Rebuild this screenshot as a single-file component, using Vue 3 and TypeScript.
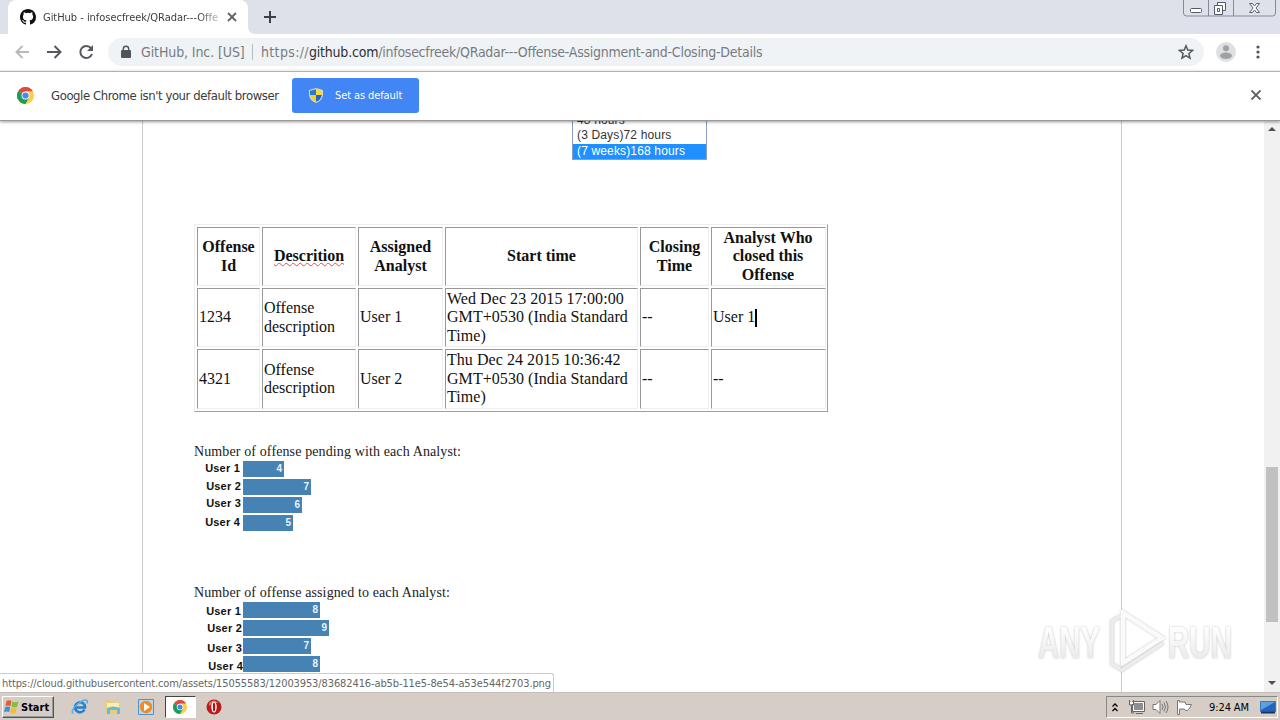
<script setup lang="ts">
interface Offense {
  id: string
  description: string
  assigned: string
  start: string
  closing: string
  closedBy: string
  editing?: boolean
}
interface Chart {
  title: string
  kind: string
  rows: { user: string; value: number }[]
}

const headers: string[] = ['Offense Id', 'Descrition', 'Assigned Analyst', 'Start time', 'Closing Time', 'Analyst Who closed this Offense']
const offenses: Offense[] = [
  { id: '1234', description: 'Offense description', assigned: 'User 1', start: 'Wed Dec 23 2015 17:00:00 GMT+0530 (India Standard Time)', closing: '--', closedBy: 'User 1', editing: true },
  { id: '4321', description: 'Offense description', assigned: 'User 2', start: 'Thu Dec 24 2015 10:36:42 GMT+0530 (India Standard Time)', closing: '--', closedBy: '--' },
]
const charts: Chart[] = [
  {
    title: 'Number of offense pending with each Analyst:',
    kind: 'pending',
    rows: [{ user: 'User 1', value: 4 }, { user: 'User 2', value: 7 }, { user: 'User 3', value: 6 }, { user: 'User 4', value: 5 }],
  },
  {
    title: 'Number of offense assigned to each Analyst:',
    kind: 'assigned',
    rows: [{ user: 'User 1', value: 8 }, { user: 'User 2', value: 9 }, { user: 'User 3', value: 7 }, { user: 'User 4', value: 8 }],
  },
]
const barWidth = (value: number): string => `${value * 9 + 5}px`
</script>

<template>
  <div class="screen">
    <header class="tabstrip">
      <div class="tab">
        <svg class="octo" width="16" height="16" viewBox="0 0 16 16"><path fill="#111" d="M8 0C3.58 0 0 3.58 0 8c0 3.54 2.29 6.53 5.47 7.59.4.07.55-.17.55-.38 0-.19-.01-.82-.01-1.49-2.01.37-2.53-.49-2.69-.94-.09-.23-.48-.94-.82-1.13-.28-.15-.68-.52-.01-.53.63-.01 1.08.58 1.23.82.72 1.21 1.87.87 2.33.66.07-.52.28-.87.51-1.07-1.78-.2-3.64-.89-3.64-3.95 0-.87.31-1.59.82-2.15-.08-.2-.36-1.02.08-2.12 0 0 .67-.21 2.2.82a7.6 7.6 0 0 1 4 0c1.53-1.04 2.2-.82 2.2-.82.44 1.1.16 1.92.08 2.12.51.56.82 1.27.82 2.15 0 3.07-1.87 3.75-3.65 3.95.29.25.54.73.54 1.48 0 1.07-.01 1.93-.01 2.2 0 .21.15.46.55.38A8 8 0 0 0 16 8c0-4.42-3.58-8-8-8z" /></svg>
        <span class="tab-title">GitHub - infosecfreek/QRadar---Offe</span>
        <svg class="tab-close" width="10" height="10" viewBox="0 0 10 10"><path d="M1 1l8 8M9 1L1 9" stroke="#5f6368" stroke-width="1.8" /></svg>
      </div>
      <svg class="tab-foot" width="8" height="8" viewBox="0 0 8 8"><path d="M0 0v8h8Q0 8 0 0z" fill="#fff" /></svg>
      <svg class="newtab" width="12" height="12" viewBox="0 0 12 12"><path d="M6 0v12M0 6h12" stroke="#3c4043" stroke-width="2" /></svg>
      <svg class="winbtns" width="94" height="18" viewBox="0 0 94 18" fill="none">
        <path d="M.5 0v13q0 3 3 3h86q3 0 3-3V0M25.500 0v16M50.500 0v16" stroke="#85899a" />
        <rect x="7.500" y="8.500" width="11" height="4" rx="1" fill="#fff" stroke="#555b66" />
        <path d="M34.500 2.500h8v8h-8z" fill="#fff" stroke="#555b66" />
        <path d="M31.500 5.500h8v9h-8z" fill="#fff" stroke="#555b66" />
        <path d="M34.500 8.500h2v3h-2z" stroke="#555b66" />
        <path d="M66.500 3.500h3l2 2.500 2-2.500h3l-3.500 4.500 3.500 4.500h-3l-2-2.500-2 2.500h-3l3.500-4.500z" fill="#fff" stroke="#5c616c" />
      </svg>
    </header>

    <div class="toolbar">
      <svg class="nav" width="100" height="24" viewBox="0 0 100 24" fill="none" stroke-width="2">
        <path d="M29 12H17M22.500 6l-6 6 6 6" stroke="#b8babd" />
        <path d="M47 12h13M54.500 6l6 6-6 6" stroke="#55585c" />
        <path d="M91 8.200A6 6 0 1 0 92 14" stroke="#55585c" />
        <path d="M93 5v6h-6z" fill="#55585c" />
      </svg>
      <div class="omnibox">
        <svg width="10" height="14" viewBox="0 0 10 14"><path d="M2.300 6V4a2.700 2.700 0 0 1 5.400 0v2" fill="none" stroke="#505358" stroke-width="1.400" /><rect x="0" y="5" width="10" height="8" rx="1" fill="#505358" /></svg>
        <span class="org">GitHub, Inc. [US]</span>
        <i class="sep"></i>
        <span class="url"><span class="scheme">https://</span><b>github.com</b>/infosecfreek/QRadar---Offense-Assignment-and-Closing-Details</span>
        <svg class="star" width="16" height="16" viewBox="0 0 16 16"><path d="M8 1.800l1.800 4.300 4.700.4-3.600 3 1.100 4.600L8 11.600l-4 2.500 1.100-4.600-3.600-3 4.700-.4z" fill="none" stroke="#55585c" stroke-width="1.500" /></svg>
      </div>
      <svg class="avatar" width="20" height="20" viewBox="0 0 20 20"><circle cx="10" cy="10" r="10" fill="#dfe0e1" /><circle cx="10" cy="6.200" r="3" fill="#a0a1a3" /><ellipse cx="10" cy="13.700" rx="6" ry="3.200" fill="#a0a1a3" /></svg>
      <svg class="dots" width="4" height="14" viewBox="0 0 4 14" fill="#505358"><circle cx="2" cy="2" r="1.600" /><circle cx="2" cy="7" r="1.600" /><circle cx="2" cy="12" r="1.600" /></svg>
    </div>

    <div class="infobar">
      <svg class="chrome" width="17" height="17" viewBox="0 0 18 18"><circle cx="9" cy="9" r="9" fill="#ffcd40" /><path d="M9 9L1.200 4.500A9 9 0 0 1 16.800 4.500H9z" fill="#de4b3d" /><path d="M1.200 4.500A9 9 0 0 0 9 18l3.700-6.800L9 9z" fill="#1b9d58" /><circle cx="9" cy="9" r="4.200" fill="#fff" /><circle cx="9" cy="9" r="3.300" fill="#4588f0" /></svg>
      <span class="message">Google Chrome isn't your default browser</span>
      <div class="default-btn">
        <svg width="14" height="15" viewBox="0 0 14 15"><path d="M7 0L0 2v5q1 6 7 8 6-2 7-8V2z" fill="#d5d8c4" /><path d="M7 1.200L1 2.800V7h6z" fill="#2579d0" /><path d="M7 1.200l6 1.600V7H7z" fill="#f7d83e" /><path d="M1.200 7H7v6.700Q2 12 1.200 7z" fill="#f5cf32" /><path d="M7 7h5.800Q12 12 7 13.700z" fill="#2268bd" /></svg>
        <span>Set as default</span>
      </div>
      <svg class="info-close" width="10" height="10" viewBox="0 0 10 10"><path d="M.5.5l9 9M9.500.5l-9 9" stroke="#5b5b5b" stroke-width="1.800" /></svg>
    </div>

    <div class="viewport">
      <main class="page">
        <div class="listbox">
          <div class="partial">48 hours</div>
          <div>(3 Days)72 hours</div>
          <div class="chosen">(7 weeks)168 hours</div>
        </div>
        <div class="table">
          <div v-for="h in headers" :key="h" class="cell head"><span :class="{ misspelt: h === 'Descrition' }">{{ h }}</span></div>
          <template v-for="o in offenses" :key="o.id">
            <div class="cell"><span>{{ o.id }}</span></div>
            <div class="cell"><span>{{ o.description }}</span></div>
            <div class="cell"><span>{{ o.assigned }}</span></div>
            <div class="cell"><span class="date">{{ o.start }}</span></div>
            <div class="cell"><span>{{ o.closing }}</span></div>
            <div class="cell"><span>{{ o.closedBy }}</span><i v-if="o.editing" class="caret"></i></div>
          </template>
        </div>
        <section v-for="c in charts" :key="c.kind" class="chart" :class="c.kind">
          <h2>{{ c.title }}</h2>
          <div v-for="r in c.rows" :key="r.user" class="row">
            <span class="label">{{ r.user }}</span>
            <div class="bar" :style="{ width: barWidth(r.value) }">{{ r.value }}</div>
          </div>
        </section>
      </main>
      <aside class="scrollbar">
        <svg width="8" height="4" viewBox="0 0 8 4"><path d="M0 4l4-4 4 4z" fill="#505050" /></svg>
        <div class="thumb"></div>
        <svg width="8" height="4" viewBox="0 0 8 4"><path d="M0 0h8L4 4z" fill="#505050" /></svg>
      </aside>
      <div class="status">https://cloud.githubusercontent.com/assets/15055583/12003953/83682416-ab5b-11e5-8e54-a53e544f2703.png</div>
      <svg class="watermark" width="210" height="72" viewBox="0 0 210 72">
        <defs>
          <linearGradient id="fade" x1="0" y1="0" x2="0" y2="1"><stop offset="0.2" stop-color="#fff" /><stop offset="1" stop-color="#e4e4e4" /></linearGradient>
        </defs>
        <g class="mark">
          <text x="8" y="52" textLength="62" lengthAdjust="spacingAndGlyphs">ANY</text>
          <text x="138" y="52" textLength="64" lengthAdjust="spacingAndGlyphs">RUN</text>
          <path d="M91 10l-9 5v43l10 6 41-27" fill="none" stroke="#ececec" stroke-width="3.500" />
          <path d="M93 7l39 25-39 25z" fill="none" stroke="#fafafa" stroke-width="4.500" />
        </g>
      </svg>
    </div>

    <footer class="taskbar">
      <div class="start">
        <svg width="16" height="16" viewBox="0 0 16 16"><path d="M2.500 2Q5 .5 7.500 2L6.500 7Q4 6 1.500 7z" fill="#e85b2a" /><path d="M8.500 2.500Q11 4 14.500 2.500L13 8Q10 9 7.500 7.500z" fill="#83bd45" /><path d="M1.300 8Q4 7 6.300 8L5.200 13Q3 12 0 13z" fill="#468fd5" /><path d="M7.300 8.500Q10 10 12.800 9L11.500 14Q9 15 6.200 13.500z" fill="#f4bd31" /></svg>
        <b>Start</b>
      </div>
      <div class="quick ie">
        <svg width="18" height="16" viewBox="0 0 18 16"><path d="M13.500 10.500A5 5 0 1 1 14 8.500H5" fill="none" stroke="#2480cf" stroke-width="2.600" /><path d="M2 14.500C-2 11 12-1 16 1.500q1 .8-.5 3" fill="none" stroke="#54aee9" stroke-width="1.500" /></svg>
      </div>
      <div class="quick">
        <svg width="16" height="16" viewBox="0 0 16 16"><path d="M1 1.500h6l1 2h6v11H1z" fill="#e8ce72" /><path d="M2 4h12v6H2z" fill="#fff0a8" /><path d="M2 9q6-3 13 0v6h-3v-4H5v4H2z" fill="#65b9e4" /></svg>
      </div>
      <div class="quick">
        <svg width="16" height="16" viewBox="0 0 16 16"><path d="M.5.500h15v15H.5z" fill="#b9d8f0" stroke="#4b94cc" /><circle cx="8" cy="8" r="6.200" fill="#f08b21" /><path d="M6 4l6 4-6 4z" fill="#fff" /></svg>
      </div>
      <div class="quick active">
        <svg width="14" height="14" viewBox="0 0 18 18"><circle cx="9" cy="9" r="9" fill="#ffcd40" /><path d="M9 9L1.200 4.500A9 9 0 0 1 16.800 4.500H9z" fill="#de4b3d" /><path d="M1.200 4.500A9 9 0 0 0 9 18l3.700-6.800L9 9z" fill="#1b9d58" /><circle cx="9" cy="9" r="4.200" fill="#fff" /><circle cx="9" cy="9" r="3.300" fill="#4588f0" /></svg>
      </div>
      <div class="quick opera">
        <svg width="16" height="16" viewBox="0 0 16 16"><circle cx="8" cy="8" r="7.500" fill="#b91b1b" /><path d="M3 4q5-5 10 0-5-1-10 3z" fill="#e07065" /><ellipse cx="8" cy="8" rx="2.700" ry="5.500" fill="#fff" /><ellipse cx="8" cy="8" rx="1.200" ry="4.500" fill="#a81616" /></svg>
      </div>
      <div class="tray">
        <svg class="chev" width="6" height="9" viewBox="0 0 6 9" fill="none" stroke="#000" stroke-width="1.300"><path d="M.5 3.500L3 1l2.500 2.500M.5 8L3 5.500 5.500 8" /></svg>
        <svg class="net" width="17" height="16" viewBox="0 0 17 16"><path d="M5.500 3.500h10v8h-10z" fill="#8f8f8f" stroke="#fff" /><path d="M4.500 2.500h12v10h-12zM8 14.500h7M1.500 1v5h4V1M3.500 6v8h3" fill="none" stroke="#666" /><path d="M2 3h3v2H2z" fill="#fff" /></svg>
        <svg class="vol" width="17" height="16" viewBox="0 0 17 16" fill="none" stroke="#757575"><path d="M1 5.500h3L8 1.500v13l-4-4H1z" fill="#fff" /><path d="M10 5q2 3 0 6M12 3.500q3 4.500 0 9M14 2q4 6 0 12" /></svg>
        <svg class="flag" width="17" height="15" viewBox="0 0 17 15"><path d="M1.500.500v14h2V9h5l1 1.500q3 1 6-6H10L9 2H3.500V.500z" fill="#fff" stroke="#777" /></svg>
        <span class="clock">9:24 AM</span>
        <svg class="desk" width="16" height="13" viewBox="0 0 16 13"><path d="M.5.500h15v10H.5z" fill="#2464bd" stroke="#3d77bd" /><path d="M1 1h14L1 9z" fill="#5ba0df" /><path d="M1 11.500h14" stroke="#17345e" stroke-width="2" /></svg>
      </div>
    </footer>
  </div>
</template>

<style>
body { margin: 0; overflow: hidden; }
</style>

<style scoped>
.screen { width: 1280px; height: 720px; display: flex; flex-direction: column; overflow: hidden; background: #fff; font-family: "DejaVu Sans Condensed", "DejaVu Sans", sans-serif; font-stretch: condensed; }
svg { display: block; flex: none; }
.tabstrip { height: 34px; flex: none; background: #dee1e9; display: flex; box-sizing: border-box; padding-left: 8px; }
.tab { width: 240px; height: 34px; box-sizing: border-box; background: #fff; border-radius: 8px 8px 0 0; display: flex; align-items: center; padding-left: 12px; }
.tab-title { width: 176px; margin-left: 7px; margin-right: 1px; white-space: nowrap; font-size: 11px; color: #3c4043; letter-spacing: -0.03px; mask-image: linear-gradient(90deg, #000 88%, rgba(0, 0, 0, 0.3)); }
.tab-close { margin-left: 7px; }
.tab-foot { align-self: flex-end; }
.newtab { margin: 11px 0 0 8px; }
.winbtns { margin-left: auto; margin-right: 3px; }
.toolbar { height: 37px; flex: none; display: flex; align-items: center; background: #fff; padding-bottom: 1px; box-sizing: border-box; }
.nav { margin-right: 8px; }
.omnibox { width: 1096px; height: 28px; box-sizing: border-box; border-radius: 14px; background: #f0f3f6; display: flex; align-items: center; padding: 0 10px 0 13px; color: #777b80; font-size: 14px; white-space: nowrap; }
.org { margin-left: 10px; width: 104px; letter-spacing: -0.1px; }
.sep { width: 1px; height: 16px; margin: 0 8px 0 7px; background: #b8bbc0; }
.url { letter-spacing: -0.26px; }
.scheme { letter-spacing: 0.35px; }
.url b { font-weight: 400; color: #2d3033; letter-spacing: -0.2px; }
.star { margin-left: auto; }
.avatar { margin-left: 12px; }
.dots { margin-left: 20px; }
.infobar { position: relative; z-index: 2; height: 50px; flex: none; box-sizing: border-box; border-top: 1px solid #b2b2b2; border-bottom: 1px solid #999; box-shadow: 0 1px 3px rgba(0, 0, 0, 0.4); background: #fff; display: flex; align-items: center; padding: 0 19px 2px 17px; }
.message { margin-left: 17px; width: 229px; font-size: 13px; color: #3b3b3b; white-space: nowrap; letter-spacing: -0.42px; }
.default-btn { margin-left: 12px; width: 127px; height: 35px; box-sizing: border-box; border-radius: 3px; background: #4285f4; color: #fff; font-size: 11px; letter-spacing: -0.1px; display: flex; align-items: center; padding-left: 17px; gap: 12px; white-space: nowrap; }
.info-close { margin-left: auto; }
.viewport { position: relative; height: 571px; flex: none; overflow: hidden; display: flex; justify-content: space-between; }
.page { width: 980px; box-sizing: border-box; margin-left: 142px; border: solid #ccc; border-width: 0 1px; padding-left: 51px; font-family: "Liberation Serif", serif; color: #111; }
.listbox { width: 135px; height: 48px; margin: -9px 0 0 378px; box-sizing: border-box; border: 1px solid #8d9ec3; border-width: 0 1px 1px; font: 12px/16px "Liberation Sans", sans-serif; letter-spacing: 0.15px; color: #333; }
.listbox div { height: 16px; padding-left: 4px; line-height: 14px; }
.listbox .partial { line-height: 16px; }
.listbox .chosen { height: 15px; background: #1e90ff; color: #fff; }
.table { width: 634px; height: 188px; box-sizing: border-box; margin-top: 64px; border: 1px solid; border-color: #eee #a0a0a0 #a0a0a0 #eee; padding: 2px 1px 2px 2px; display: grid; grid-template-columns: 63px 94px 85px 193px 69px 115px; grid-template-rows: 59px 59px 60px; gap: 2px; }
.cell { min-width: 0; box-sizing: border-box; border: 1px solid; border-color: #999 #eee #eee #999; padding: 0 1px; display: flex; align-items: center; font-size: 16px; line-height: 18.5px; }
.head { justify-content: center; text-align: center; font-weight: 700; }
.head:nth-child(6) { padding-right: 2px; }
.date { letter-spacing: 0.05px; }
.misspelt { text-decoration: underline wavy #e04a50 1px; text-underline-offset: 1px; }
.caret { width: 2px; height: 18px; background: #000; }
.chart { height: 141px; }
.chart.pending { margin-top: 30px; }
.chart h2 { margin: 0; height: 19px; font-size: 14px; line-height: 19px; font-weight: 400; white-space: nowrap; color: #222; letter-spacing: 0.12px; }
.row { height: 18px; display: flex; font-family: "Liberation Sans", sans-serif; }
.label { width: 49px; box-sizing: border-box; text-align: right; padding-right: 2px; font-size: 11px; line-height: 15px; font-weight: 700; letter-spacing: 0.2px; white-space: nowrap; }
.pending .row:nth-child(2) .label, .pending .row:nth-child(5) .label { padding-right: 3px; }
.pending .row:nth-child(4) .label { line-height: 13px; }
.assigned .label { padding-right: 1px; line-height: 18px; }
.assigned .row:nth-child(2) .label { padding-right: 2px; }
.assigned .row:nth-child(3) .label { line-height: 16px; }
.assigned .row:nth-child(4) .label, .assigned .row:nth-child(5) .label { line-height: 20px; }
.assigned .row:nth-child(5) .label { padding-right: 0; }
.bar { height: 16px; box-sizing: border-box; background: #4682b4; color: #e8f4ff; font-size: 10px; font-weight: 700; line-height: 16px; text-align: right; padding-right: 2px; }
.scrollbar { width: 16px; box-sizing: border-box; background: #f1f1f1; display: flex; flex-direction: column; align-items: center; padding: 6px 0 7px; }
.thumb { width: 12px; height: 155px; margin: 336px 0 auto; background: #c1c1c1; }
.status { position: absolute; left: 0; bottom: 0; height: 19px; width: 554px; box-sizing: border-box; background: #fff; border: solid #ccc; border-width: 1px 1px 0 0; border-radius: 0 3px 0 0; padding-left: 2px; font-size: 11px; line-height: 19px; letter-spacing: -0.11px; color: #666; white-space: nowrap; }
.watermark { position: absolute; left: 1030px; top: 485px; }
.mark { filter: drop-shadow(0 0 1px rgba(0, 0, 0, 0.25)); }
.mark text { font: 700 44px "Liberation Sans", sans-serif; fill: url(#fade); }
.taskbar { height: 28px; flex: none; box-sizing: border-box; border-top: 1px solid #c5c0ba; background: #d6cec6; display: flex; align-items: center; padding: 1px 2px 0; }
.start { width: 52px; height: 22px; box-sizing: border-box; border: 1px solid; border-color: #fff #555 #555 #fff; box-shadow: inset -1px -1px #999; display: flex; align-items: center; padding-left: 1px; gap: 1px; margin-right: 11px; font-size: 11px; color: #000; }
.quick { width: 32px; height: 22px; margin-right: 1.5px; box-sizing: border-box; display: flex; align-items: center; justify-content: center; }
.quick.ie { padding-right: 3px; }
.quick + .quick:not(.active) { padding-right: 4px; }
.quick.active { width: 31px; margin-left: -1px; background: #fff; border: 1px solid; border-color: #444 #fff #fff #444; }
.quick.opera { margin-left: 3px; }
.tray { margin-left: auto; width: 172px; height: 22px; box-sizing: border-box; border: 1px solid; border-color: #888 #fff #fff #888; display: flex; align-items: center; font-size: 11px; color: #000; padding-left: 5px; }
.net { margin-left: 10px; }
.vol { margin-left: 7px; }
.flag { margin-left: 7px; }
.clock { width: 41px; margin-left: 16px; white-space: nowrap; letter-spacing: -0.1px; }
.desk { margin-left: 10px; }
</style>
